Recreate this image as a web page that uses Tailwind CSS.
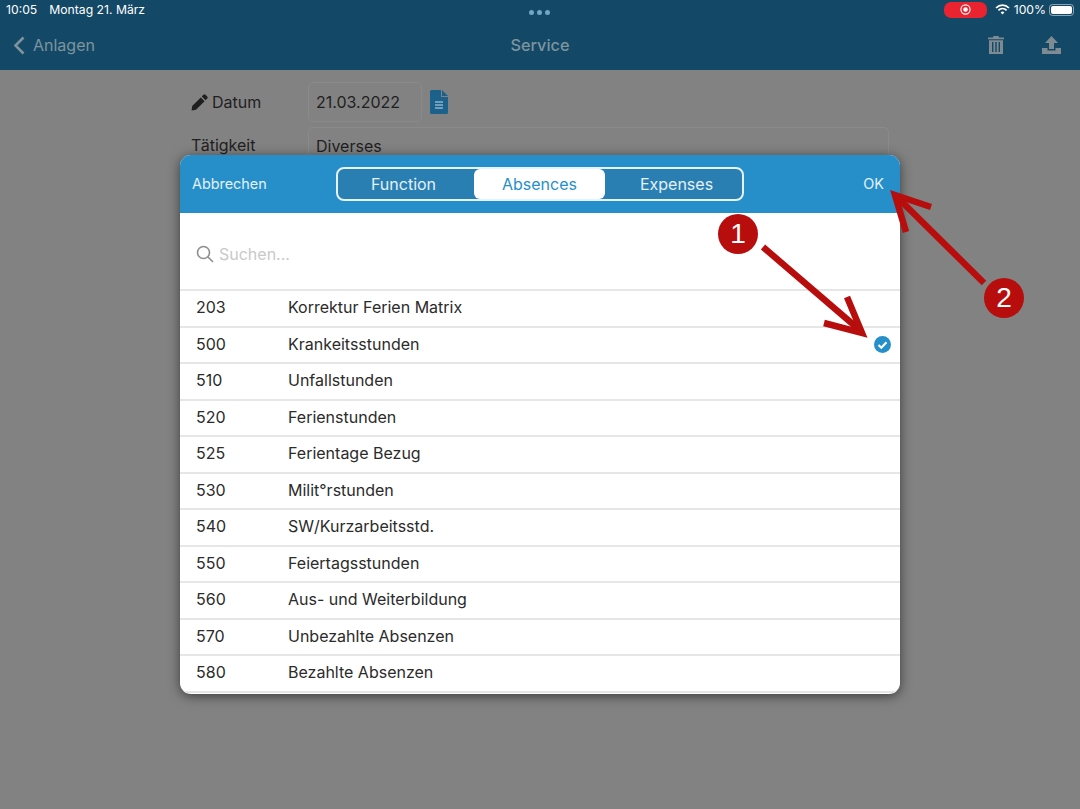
<!DOCTYPE html>
<html lang="de">
<head>
    <meta charset="UTF-8">
    <title>Service</title>
    <script src="https://cdn.jsdelivr.net/npm/@tailwindcss/browser@4"></script>
</head>
<body class="font-['Inter','Noto_Sans',sans-serif] bg-[#828282]">
    <div class="relative w-[1080px] h-[809px] overflow-hidden">
        <!-- Header -->
        <div class="h-[70px] bg-[#134866]">
            <div class="relative h-[20px] flex items-center justify-between pl-[6px] pr-[6px] text-[12.2px] text-white">
                <div class="flex gap-[12px]"><span>10:05</span><span>Montag 21. März</span></div>
                <div class="absolute left-[529px] top-[10px] flex gap-[3px]">
                    <span class="w-[5px] h-[5px] rounded-full bg-[#6fa8c6]"></span>
                    <span class="w-[5px] h-[5px] rounded-full bg-[#6fa8c6]"></span>
                    <span class="w-[5px] h-[5px] rounded-full bg-[#6fa8c6]"></span>
                </div>
                <div class="flex items-center">
                    <div class="w-[43px] h-[16px] rounded-[7px] bg-[#e9232f] flex items-center justify-center mr-[8px]">
                        <svg width="11" height="11" viewBox="0 0 11 11"><circle cx="5.5" cy="5.5" r="4.6" fill="none" stroke="#fff" stroke-width="1.1"/><circle cx="5.5" cy="5.5" r="2.3" fill="#fff"/></svg>
                    </div>
                    <svg width="15" height="11" viewBox="0 0 15 11" fill="none" stroke="#fff" stroke-width="1.7" class="mr-[4px]"><path d="M1 4a9 9 0 0 1 13 0"/><path d="M3.4 6.3a5.6 5.6 0 0 1 8.2 0"/><path d="M7.5 10.6 5.6 8.5a2.7 2.7 0 0 1 3.8 0z" fill="#fff" stroke="none"/></svg>
                    <span>100%</span>
                    <div class="ml-[3px] w-[25px] h-[12px] rounded-[3.5px] border border-white/50 p-[1px]"><div class="w-full h-full bg-white rounded-[2px]"></div></div>
                </div>
            </div>
            <div class="relative h-[50px] flex items-center justify-between pl-[13px] pr-[19px]">
                <div class="flex items-center gap-[8px] text-[#7d949f] text-[16px]">
                    <svg width="12" height="19" viewBox="0 0 12 19" fill="none" stroke="#7d949f" stroke-width="2.6"><path d="M10.5 1.5 2.5 9.5l8 8"/></svg>
                    <span>Anlagen</span>
                </div>
                <div class="absolute left-0 right-0 text-center text-[16.3px] font-medium text-[#7d949f]">Service</div>
                <div class="flex items-center gap-[38px]">
                    <svg width="16" height="18" viewBox="0 0 16 18" fill="#7e8b92"><path d="M5.5 0h5l.6 1.6H16v1.6H0V1.6h4.9z"/><path fill-rule="evenodd" d="M1 4.2h14V18H1zM4 6v10h1.4V6zm3.3 0v10h1.4V6zm3.3 0v10H12V6z"/></svg>
                    <svg width="19" height="18" viewBox="0 0 19 18" fill="#7e8b92"><path d="M9.500 0 16 7h-4v6H7V7H3z"/><path d="M0 12h5.500v2.500h8V12H19v6H0z"/></svg>
                </div>
            </div>
        </div>

        <!-- Form behind the dialog -->
        <div class="pl-[191px] pt-[12px] text-[16px] text-[#1f1f1f]">
            <div class="flex items-center h-[40px]">
                <div class="w-[117px] flex items-center gap-[4px]">
                    <svg width="17" height="17" viewBox="0 0 17 17" fill="#1f1f1f"><path d="M12.4.8a1.4 1.4 0 0 1 2 0l1.8 1.8a1.4 1.4 0 0 1 0 2L14.6 6.2 10.8 2.4z"/><path d="M9.8 3.4l3.8 3.8L5 15.8.6 16.4 1.2 12z"/></svg>
                    <span>Datum</span>
                </div>
                <div class="w-[114px] h-[40px] rounded-[5px] border border-[#8a8a8a] flex items-center pl-[7px]">21.03.2022</div>
                <svg width="18" height="24" viewBox="0 0 18 24" class="ml-[8px]"><path d="M0 1.500A1.500 1.500 0 0 1 1.500 0H11v7h7v15.500a1.500 1.500 0 0 1-1.500 1.500h-15A1.500 1.500 0 0 1 0 22.500z" fill="#1b618c"/><path d="M12 0l6 6h-6z" fill="#1b618c"/><path d="M5 12h8M5 15h8M5 18h8" stroke="#8fb3c9" stroke-width="1.300"/></svg>
            </div>
            <div class="flex items-start h-[40px] mt-[5px]">
                <div class="w-[117px] pt-[6px]">Tätigkeit</div>
                <div class="w-[581px] h-[40px] rounded-[5px] border border-[#8a8a8a] pl-[7px] pt-[6px]">Diverses</div>
            </div>
        </div>

        <!-- Dialog -->
        <div class="absolute left-[180px] top-[155px] w-[720px] h-[539px] rounded-[11px] bg-white overflow-hidden shadow-[0_2px_12px_rgba(0,0,0,0.55)] flex flex-col">
            <div class="relative h-[58px] shrink-0 bg-[#268fc9] flex items-center justify-between pl-[12px] pr-[16px] text-[14.4px] text-[#e3f1f9]">
                <span>Abbrechen</span>
                <span>OK</span>
                <div class="absolute left-[156px] top-[12px] w-[408px] h-[34px] rounded-[8px] border-2 border-[#e6f2f9] bg-[#2a7fb2] grid grid-cols-[136px_131px_1fr] text-[16px] text-center leading-[30px]">
                    <div class="pr-[5px]">Function</div>
                    <div class="bg-white rounded-[6px] text-[#268fc9]">Absences</div>
                    <div class="pl-[6px]">Expenses</div>
                </div>
            </div>
            <div class="h-[76px] shrink-0 flex items-center pl-[16px] pt-[6px] gap-[5px] text-[16px] text-[#c9c9c9]">
                <svg width="18" height="18" viewBox="0 0 18 18" fill="none" stroke="#8e8e8e" stroke-width="1.6"><circle cx="7.500" cy="7.500" r="6"/><path d="m12 12 5 5"/></svg>
                <span>Suchen...</span>
            </div>
            <div id="rows" class="text-[16px] text-[#2b2b2b]">
                <div class="h-[36.5px] border-t-2 border-[#e6e6e6] flex items-center pl-[16px] pb-[2px]"><span class="w-[92px]">203</span><span>Korrektur Ferien Matrix</span></div>
                <div class="relative h-[36.5px] border-t-2 border-[#e6e6e6] flex items-center pl-[16px] pb-[2px]"><span class="w-[92px]">500</span><span>Krankeitsstunden</span>
                    <svg width="17" height="17" viewBox="0 0 17 17" class="absolute right-[9px] top-[8px]"><circle cx="8.500" cy="8.500" r="8.500" fill="#268fc9"/><path d="m4.500 9 2.800 2.700 5.200-5.400" fill="none" stroke="#fff" stroke-width="2.200"/></svg>
                </div>
                <div class="h-[36.5px] border-t-2 border-[#e6e6e6] flex items-center pl-[16px] pb-[2px]"><span class="w-[92px]">510</span><span>Unfallstunden</span></div>
                <div class="h-[36.5px] border-t-2 border-[#e6e6e6] flex items-center pl-[16px] pb-[2px]"><span class="w-[92px]">520</span><span>Ferienstunden</span></div>
                <div class="h-[36.5px] border-t-2 border-[#e6e6e6] flex items-center pl-[16px] pb-[2px]"><span class="w-[92px]">525</span><span>Ferientage Bezug</span></div>
                <div class="h-[36.5px] border-t-2 border-[#e6e6e6] flex items-center pl-[16px] pb-[2px]"><span class="w-[92px]">530</span><span>Milit°rstunden</span></div>
                <div class="h-[36.5px] border-t-2 border-[#e6e6e6] flex items-center pl-[16px] pb-[2px]"><span class="w-[92px]">540</span><span>SW/Kurzarbeitsstd.</span></div>
                <div class="h-[36.5px] border-t-2 border-[#e6e6e6] flex items-center pl-[16px] pb-[2px]"><span class="w-[92px]">550</span><span>Feiertagsstunden</span></div>
                <div class="h-[36.5px] border-t-2 border-[#e6e6e6] flex items-center pl-[16px] pb-[2px]"><span class="w-[92px]">560</span><span>Aus- und Weiterbildung</span></div>
                <div class="h-[36.5px] border-t-2 border-[#e6e6e6] flex items-center pl-[16px] pb-[2px]"><span class="w-[92px]">570</span><span>Unbezahlte Absenzen</span></div>
                <div class="h-[36.5px] border-t-2 border-[#e6e6e6] flex items-center pl-[16px] pb-[2px]"><span class="w-[92px]">580</span><span>Bezahlte Absenzen</span></div>
                <div class="h-[3px] border-t-2 border-[#e6e6e6]"></div>
            </div>
        </div>

        <!-- Annotation arrows -->
        <svg class="absolute left-0 top-0" width="1080" height="809" fill="none" stroke="#b80d0d" stroke-width="6.500">
            <path d="M763 247 862 332"/>
            <path d="M847 297 862 333 824 323"/>
            <path d="M984 283 895 195"/>
            <path d="M931 207 895 195 906 232"/>
        </svg>
        <div class="absolute left-[718px] top-[214px] w-[40px] h-[40px] rounded-full bg-[#b80d0d] text-white text-[28px] flex items-center justify-center font-['Liberation_Sans',sans-serif]">1</div>
        <div class="absolute left-[984px] top-[278px] w-[40px] h-[40px] rounded-full bg-[#b80d0d] text-white text-[28px] flex items-center justify-center font-['Liberation_Sans',sans-serif]">2</div>
    </div>
</body>
</html>
